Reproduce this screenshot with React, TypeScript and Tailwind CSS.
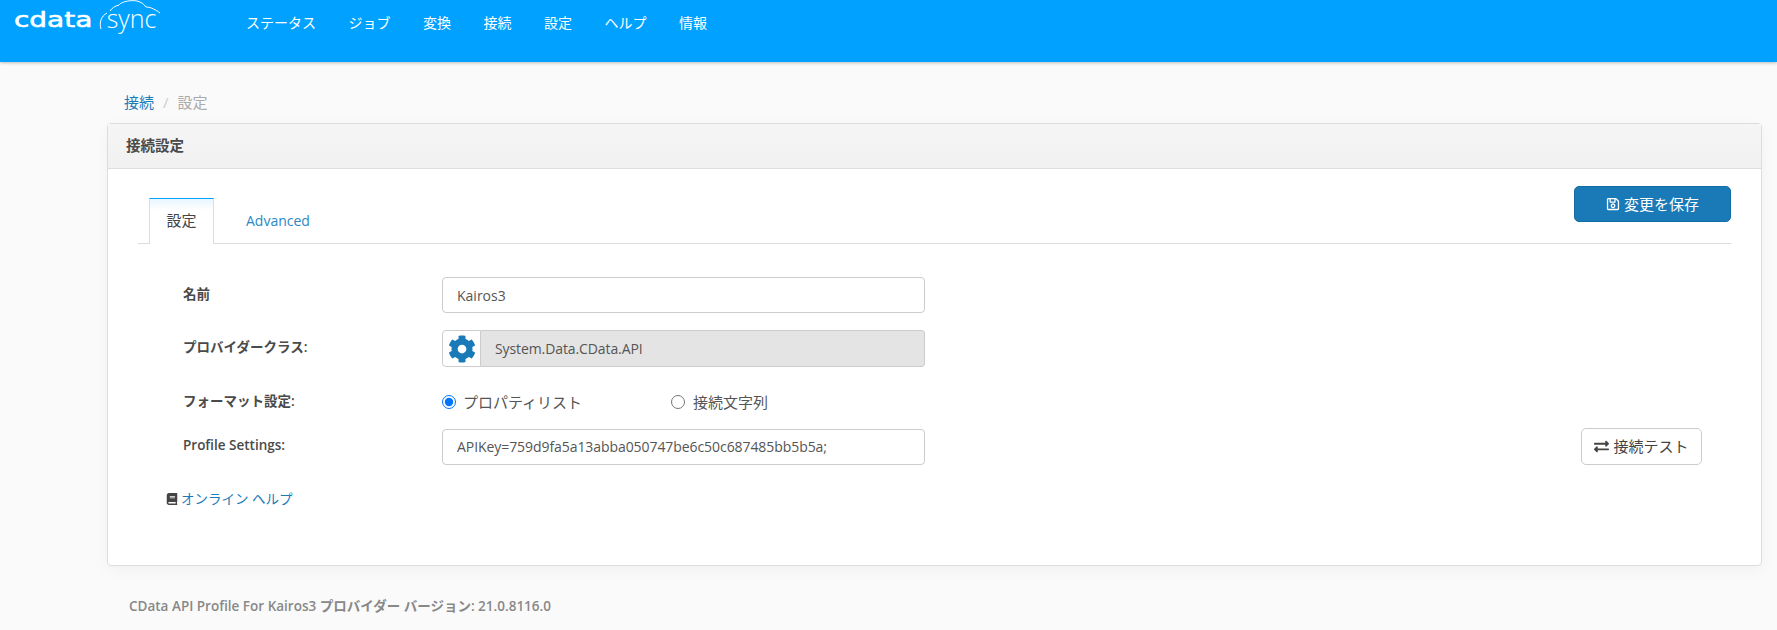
import React from 'react';
import { FaBook, FaCog, FaExchangeAlt, FaRegSave } from 'react-icons/fa';

const navItems = ['ステータス', 'ジョブ', '変換', '接続', '設定', 'ヘルプ', '情報'];

const Logo = () => (
  <div className="relative flex h-[62px] w-[246px] shrink-0 items-start pl-[14px] pt-[5px] text-white">
    <span className="origin-left scale-x-[1.27] font-['DejaVu_Sans',sans-serif] text-[22px] leading-[30px] [-webkit-text-stroke:0.6px_white]">cdata</span>
    <span className="ml-[31px] -mt-[2px] font-['Open_Sans',sans-serif] text-[25px] font-light leading-[30px]">sync</span>
    <svg className="absolute left-[96px] top-0" width="70" height="36" viewBox="0 0 70 36" fill="none" stroke="white" strokeWidth="1">
      <path d="M5 29C3 23 5 16 11 13" />
      <path d="M14 11C16 8 19 6 23 5C26 1 36 0 41 1C45 2 48 4 50 7C55 7 60 10 64 13" />
    </svg>
  </div>
);

const Header = () => (
  <header className="flex h-[62px] bg-[#00a1ff] shadow-[0_1px_3px_rgba(0,0,0,0.25)]">
    <Logo />
    <nav className="flex h-[45px] items-center gap-[32.5px] text-[14px] text-white">
      {navItems.map((item) => (
        <span key={item}>{item}</span>
      ))}
    </nav>
  </header>
);

const FormRow = ({ label, className, children }: { label: string; className?: string; children: React.ReactNode }) => (
  <div className={`flex items-center ${className ?? ''}`}>
    <label className="w-[259px] shrink-0 pb-[2px] text-[13.5px] font-semibold text-[#4a4a4a]">{label}</label>
    {children}
  </div>
);

export default function App() {
  return (
    <div className="h-[630px] overflow-hidden bg-[#fafafa] font-['Open_Sans','Noto_Sans_CJK_JP',sans-serif] text-[14px] text-[#555]">
      <Header />
      <main className="ml-[107px] mr-[15px]">
        <div className="flex h-[61px] items-center gap-[9px] pl-[17px] pt-[20px] text-[15px]">
          <a className="text-[#1a7ab8]">接続</a>
          <span className="text-[#ccc]">/</span>
          <span className="text-[#aaa]">設定</span>
        </div>

        <section className="h-[443px] rounded-[4px] border border-[#ddd] bg-white shadow-[0_4px_16px_rgba(0,0,0,0.04)]">
          <div className="flex h-[45px] items-center border-b border-[#ddd] bg-gradient-to-b from-[#f5f5f5] to-[#f1f1f1] pl-[18px] text-[14.5px] font-semibold text-[#4a4a4a]">
            接続設定
          </div>

          <div className="pl-[30px] pr-[30px]">
            <div className="flex items-start justify-between border-b border-[#ddd] pt-[17px]">
              <div className="flex pl-[11px] pt-[12px]">
                <div className="-mb-px flex h-[46px] w-[65px] items-center justify-center border-x border-t border-x-[#ddd] border-t-[#00a1ff] bg-gradient-to-b from-[#e8f6ff] to-white to-[25%] pb-[2px] text-[15px] text-[#444]">
                  設定
                </div>
                <a className="flex h-[45px] items-center pl-[32px] text-[#2d87c4]">Advanced</a>
              </div>
              <button className="mb-[21px] flex h-[36px] w-[157px] items-center justify-center gap-[4px] rounded-[5px] border border-[#166da3] bg-[#1a7ab8] text-[15px] text-white">
                <FaRegSave className="text-[14px]" />
                変更を保存
              </button>
            </div>

            <div className="pl-[45px] pt-[33px]">
              <FormRow label="名前">
                <input
                  defaultValue="Kairos3"
                  className="h-[36px] w-[483px] rounded-[4px] border border-[#ccc] bg-white px-[14px] text-[#555]"
                />
              </FormRow>

              <FormRow label="プロバイダークラス:" className="mt-[17px]">
                <div className="flex h-[37px] w-[483px]">
                  <span className="flex w-[39px] items-center justify-center rounded-l-[4px] border border-[#ccc] bg-white">
                    <FaCog className="text-[28px] text-[#1a7ab8]" />
                  </span>
                  <div className="flex flex-1 items-center rounded-r-[4px] border border-l-0 border-[#ccc] bg-[#e4e4e4] pl-[14px] tracking-[-0.1px] text-[#555]">
                    System.Data.CData.API
                  </div>
                </div>
              </FormRow>

              <FormRow label="フォーマット設定:" className="mt-[23px] h-[24px]">
                <label className="flex w-[229px] items-center gap-[7px] text-[15px]">
                  <input type="radio" name="format" defaultChecked className="m-0 h-[14px] w-[14px]" />
                  プロパティリスト
                </label>
                <label className="flex items-center gap-[8px] text-[15px]">
                  <input type="radio" name="format" className="m-0 h-[14px] w-[14px]" />
                  接続文字列
                </label>
              </FormRow>

              <div className="mt-[14px] flex items-center justify-between pr-[29px]">
                <FormRow label="Profile Settings:">
                  <input
                    defaultValue="APIKey=759d9fa5a13abba050747be6c50c687485bb5b5a;"
                    className="h-[36px] w-[483px] rounded-[4px] border border-[#ccc] bg-white px-[14px] tracking-[-0.07px] text-[#555]"
                  />
                </FormRow>
                <button className="flex h-[37px] w-[121px] items-center justify-center gap-[4px] rounded-[5px] border border-[#ccc] bg-white text-[15px] text-[#444]">
                  <FaExchangeAlt className="text-[15px]" />
                  接続テスト
                </button>
              </div>
            </div>

            <a className="mt-[24px] flex items-center gap-[3px] pl-[28px] text-[13.5px] text-[#1a7ab8]">
              <FaBook className="text-[12px] text-[#444]" />
              オンライン ヘルプ
            </a>
          </div>
        </section>

        <p className="pl-[22px] pt-[30px] text-[13.5px] font-semibold text-[#888]">
          CData API Profile For Kairos3 プロバイダー バージョン: 21.0.8116.0
        </p>
      </main>
    </div>
  );
}
